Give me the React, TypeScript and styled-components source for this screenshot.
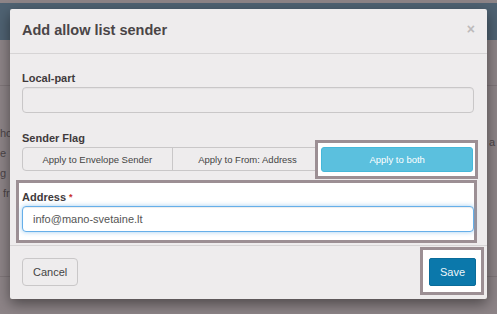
import React from 'react';
import styled, { createGlobalStyle } from 'styled-components';

const GlobalStyle = createGlobalStyle`
  html, body {
    margin: 0;
    padding: 0;
  }
  body {
    font-family: "Liberation Sans", Arial, Helvetica, sans-serif;
    background: #8d8487;
  }
  * {
    box-sizing: border-box;
  }
`;

const Page = styled.div`
  position: relative;
  width: 497px;
  height: 314px;
  overflow: hidden;
  background: #8d8487;
  padding-top: 3px;
`;

const Navbar = styled.div`
  height: 37px;
  background: #4f6272;
`;

const BackdropContent = styled.div`
  margin-top: 45px;
  height: 192px;
  border-top: 1px solid #7f7679;
  border-bottom: 1px solid #7f7679;
  display: flex;
  justify-content: space-between;
  font-size: 11px;
  line-height: 20px;
  color: #4c4447;
`;

const BackdropText = styled.div<{ $top: number }>`
  padding-top: ${(p) => p.$top}px;
  padding-right: 2px;
  white-space: pre;
`;

const Modal = styled.div`
  position: absolute;
  top: 9px;
  left: 10px;
  width: 477px;
  height: 290px;
  background: #eeeced;
  border-radius: 2px;
  box-shadow: 0 5px 14px rgba(0, 0, 0, 0.45);
  display: flex;
  flex-direction: column;
`;

const ModalHeader = styled.div`
  display: flex;
  align-items: center;
  justify-content: space-between;
  height: 45px;
  padding: 0 12px 2px 12px;
  border-bottom: 1px solid #d6d4d5;
`;

const Title = styled.h4`
  margin: 0;
  font-size: 14.5px;
  font-weight: bold;
  color: #4a4547;
`;

const Close = styled.span`
  font-size: 14px;
  font-weight: bold;
  color: #bdbabb;
  line-height: 1;
  margin-top: -3px;
`;

const ModalBody = styled.div`
  padding: 17px 13px 2px 12px;
`;

const FormGroup = styled.div<{ $gap: number }>`
  margin-bottom: ${(p) => p.$gap}px;
`;

const Label = styled.label`
  display: block;
  font-size: 11px;
  line-height: 14px;
  font-weight: bold;
  color: #3f3a3c;
  margin-bottom: 2px;
`;

const Required = styled.span`
  color: #c9302c;
  font-size: 9px;
  vertical-align: top;
  margin-left: 3px;
`;

const TextInput = styled.input<{ $focused?: boolean }>`
  display: block;
  width: 100%;
  height: 26px;
  padding: 0 10px;
  border: 1px solid ${(p) => (p.$focused ? '#66afe9' : '#c9c7c8')};
  border-radius: 4px;
  background: ${(p) => (p.$focused ? '#fff' : 'transparent')};
  box-shadow: ${(p) =>
    p.$focused
      ? 'inset 0 1px 1px rgba(0,0,0,.075), 0 0 5px rgba(102,175,233,.6)'
      : 'inset 0 1px 1px rgba(0,0,0,.04)'};
  font-family: inherit;
  font-size: 11px;
  color: #555;
  outline: none;
`;

const ButtonGroup = styled.div`
  display: grid;
  grid-template-columns: repeat(3, 1fr);
  height: 24px;
`;

const SegButton = styled.button<{ $first?: boolean }>`
  border: 1px solid #c9c7c8;
  margin-left: ${(p) => (p.$first ? 0 : -1)}px;
  border-radius: ${(p) => (p.$first ? '4px 0 0 4px' : '0')};
  background: transparent;
  font-family: inherit;
  font-size: 9.5px;
  color: #444;
  padding: 0;
`;

const Callout = styled.div`
  position: relative;
  z-index: 1;
  display: flex;
  background: #fff;
  border: 3px solid #9c8f94;
  margin: -7px -4px -8px -8px;
  padding: 4px 2px 4px 3px;
`;

const InfoButton = styled.button`
  flex: 1;
  border: 1px solid #46b8da;
  border-radius: 3px;
  background: #5bc0de;
  color: #fff;
  font-family: inherit;
  font-size: 9.5px;
  padding: 0;
`;

const CalloutGroup = styled.div`
  background: #fff;
  border: 3px solid #9c8f94;
  margin: 0 -3px 0 -6px;
  padding: 7px 0 8px 3px;
`;

const ModalFooter = styled.div`
  display: flex;
  align-items: center;
  justify-content: space-between;
  border-top: 1px solid #d6d4d5;
  padding: 12px 11px 11px 12px;
`;

const Button = styled.button<{ $primary?: boolean }>`
  height: 28px;
  padding: 0 10px;
  border: 1px solid ${(p) => (p.$primary ? '#0a6c9a' : '#c9c7c8')};
  border-radius: ${(p) => (p.$primary ? '2px' : '4px')};
  background: ${(p) => (p.$primary ? '#0b78ab' : 'transparent')};
  color: ${(p) => (p.$primary ? '#eef6fa' : '#444')};
  font-family: inherit;
  font-size: 11px;
`;

const SaveCallout = styled.div`
  display: flex;
  background: #fff;
  border: 3px solid #9c8f94;
  margin: -11px -8px -9px -9px;
  padding: 8px 5px 6px 6px;
`;

export default function App() {
  return (
    <>
      <GlobalStyle />
      <Page>
        <Navbar />
        <BackdropContent>
          <BackdropText $top={37}>{'how\ne\ng\n fr'}</BackdropText>
          <BackdropText $top={46}>{'a'}</BackdropText>
        </BackdropContent>

        <Modal>
          <ModalHeader>
            <Title>Add allow list sender</Title>
            <Close>×</Close>
          </ModalHeader>

          <ModalBody>
            <FormGroup $gap={18}>
              <Label>Local-part</Label>
              <TextInput defaultValue="" />
            </FormGroup>

            <FormGroup $gap={9}>
              <Label>Sender Flag</Label>
              <ButtonGroup>
                <SegButton $first>Apply to Envelope Sender</SegButton>
                <SegButton>Apply to From: Address</SegButton>
                <Callout>
                  <InfoButton>Apply to both</InfoButton>
                </Callout>
              </ButtonGroup>
            </FormGroup>

            <CalloutGroup>
              <Label>
                Address<Required>*</Required>
              </Label>
              <TextInput $focused defaultValue="info@mano-svetaine.lt" />
            </CalloutGroup>
          </ModalBody>

          <ModalFooter>
            <Button>Cancel</Button>
            <SaveCallout>
              <Button $primary>Save</Button>
            </SaveCallout>
          </ModalFooter>
        </Modal>
      </Page>
    </>
  );
}
